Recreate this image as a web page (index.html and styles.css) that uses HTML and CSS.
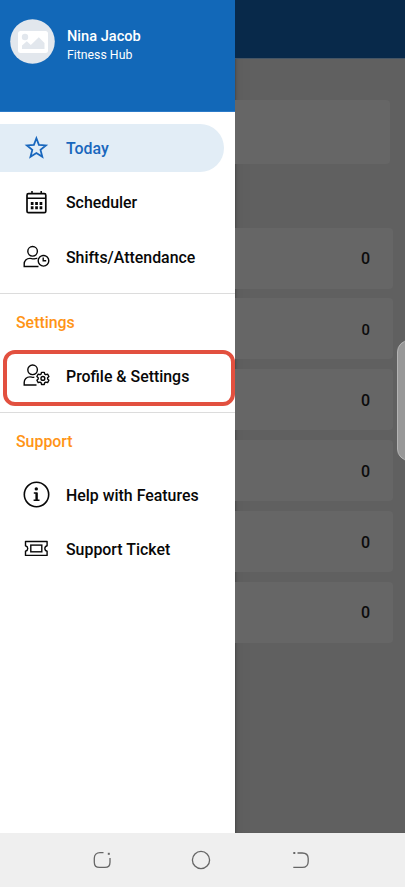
FILE: index.html
```
<!DOCTYPE html>
<html lang="en">
<head>
<meta charset="utf-8">
<title>Fitness Hub</title>
<link rel="stylesheet" href="styles.css">
</head>
<body>
<div class="phone">
  <div class="screen">
    <aside class="drawer">
      <header class="account">
        <svg class="avatar" viewBox="0 0 45 45"><circle cx="22.5" cy="22.5" r="22.3" fill="#e2e7ed"/><rect x="8" y="12" width="30" height="22" rx="2.5" fill="#fff"/><circle cx="15" cy="18" r="3.2" fill="#e2e7ed"/><path d="M12 30v-3.500l4.800-4.300 4 3.800 8-7.800 5.700 5.800v6z" fill="#e2e7ed"/></svg>
        <div class="who">
          <div class="name">Nina Jacob</div>
          <div class="club">Fitness Hub</div>
        </div>
      </header>
      <nav class="group">
        <a class="item active"><svg class="icon" viewBox="0 0 28 28"><path d="M14.400 4.300l2.500 6.600 7 .5-5.400 4.500 1.800 6.900-5.900-3.800-5.900 3.800 1.800-6.900-5.400-4.500 7-.5z" stroke-width="1.800"/></svg><span>Today</span></a>
        <a class="item"><svg class="icon" viewBox="0 0 28 28"><rect x="5" y="5.700" width="18.800" height="19" rx="1.500" stroke-width="1.700"/><path d="M5 10.300h18.800M10 3v3M19.200 3v3" stroke-width="1.500"/><path d="M8.800 15.500h2.700m1.700 0h2.700m1.700 0h2.700M8.800 19.700h2.700m1.700 0h2.700m1.700 0h2.700" stroke-width="2.900"/></svg><span>Scheduler</span></a>
        <a class="item"><svg class="icon" viewBox="0 0 28 28"><circle cx="10.600" cy="8.300" r="4.800"/><path d="M16.500 23.500H2.200v-2.400c0-3.600 2.300-5.700 5.800-5.700 1.700 0 2.300.8 4.300.4 1.300-.4 2.100-.5 3-.3"/><circle cx="21.500" cy="17.800" r="5.300"/><path d="M21.200 14.500v3.300h3"/></svg><span>Shifts/Attendance</span></a>
      </nav>
      <div class="group ruled">
        <h2>Settings</h2>
        <a class="item marked"><svg class="icon" viewBox="0 0 28 28"><circle cx="10.600" cy="7.800" r="4.800"/><path d="M14.500 23H2.200v-2.400c0-3.600 2.300-5.700 5.800-5.700 1.700 0 2.300.8 4.300.4"/><g transform="translate(20.900 16.400) scale(.87)" stroke-width="1.600"><path d="M-1.600-6.950h3.200l.5 2 1.300.7 2-.6 1.500 2.700-1.500 1.400v1.500l1.500 1.400-1.500 2.700-2-.6-1.300.7-.5 2h-3.200l-.5-2-1.300-.7-2 .6-1.500-2.700 1.500-1.400v-1.500l-1.500-1.400 1.500-2.700 2 .6 1.300-.7z" stroke-linejoin="round"/><circle r="2.200"/></g></svg><span>Profile &amp; Settings</span></a>
      </div>
      <div class="group ruled">
        <h2>Support</h2>
        <a class="item"><svg class="icon" viewBox="0 0 28 28"><circle cx="14.500" cy="13.500" r="12.200" stroke-width="1.600"/><circle cx="14.300" cy="7.900" r="1.700" fill="currentColor" stroke="none"/><path d="M11.800 12h3v7.300m-3.200 0h5.900" stroke-width="1.500"/><path d="M14.500 12v7.300" stroke-width="2.200"/></svg><span>Help with Features</span></a>
        <a class="item"><svg class="icon" viewBox="0 0 28 28"><path d="M3.500 6.500h21.600v4.200c-3 .8-3 4.700 0 5.500v4.200H3.500v-4.200c3-.8 3-4.700 0-5.500z" stroke-linejoin="round"/><rect x="8.800" y="10.100" width="11" height="6.700"/></svg><span>Support Ticket</span></a>
      </div>
    </aside>
    <main class="dimmed">
      <div class="appbar"></div>
      <div class="summary"></div>
      <div class="rows">
        <div class="row">0</div>
        <div class="row compact">0</div>
        <div class="row">0</div>
        <div class="row">0</div>
        <div class="row">0</div>
        <div class="row">0</div>
      </div>
      <div class="handle"></div>
    </main>
  </div>
  <footer class="sysnav">
    <svg viewBox="0 0 20 20"><path d="M11.500 2.600H8c-3.500 0-5.700 2.200-5.700 5.600v4c0 3.200 1.900 5.200 5.200 5.200H13c3.200 0 5-1.900 5-5.200V8"/><path d="M15.800 3.800h2" stroke-width="2"/></svg>
    <svg viewBox="0 0 20 20"><circle cx="10" cy="10" r="8.600"/></svg>
    <svg viewBox="0 0 20 20"><path d="M6.500 3h4.700c3.800 0 6 2.200 6 5.600v2.800c0 3.700-2.100 5.900-6 5.900H2.300"/><path d="M2.300 3h2" stroke-width="2"/></svg>
  </footer>
</div>
</body>
</html>
```
FILE: styles.css
```
*, *::after { box-sizing: border-box; }
body {
  margin: 0;
  background: #fff;
  font-family: Roboto, "Liberation Sans", sans-serif;
  overflow: hidden;
}
.phone { width: 405px; height: 890px; }
.screen { display: flex; height: 833px; }

.drawer {
  position: relative;
  z-index: 1;
  width: 235.400px;
  flex: none;
  background: #fff;
}
.account {
  display: flex;
  align-items: flex-start;
  height: 112px;
  padding: 19px 0 0 10px;
  gap: 12px;
  background: #1268b8;
  border-bottom: 1px solid #2c7bc9;
  color: #fff;
}
.avatar { width: 45px; height: 45px; }
.who { padding-top: 6.500px; }
.name { font-size: 14.600px; line-height: 20px; font-weight: 500; }
.club { font-size: 12.300px; line-height: 18px; }

.group { display: flex; flex-direction: column; gap: 7.200px; }
nav.group { padding: 12.400px 0 12.400px; }
.ruled { border-top: 1px solid #dcdcdc; }
.ruled h2 {
  margin: 18px 0 5.400px;
  padding-left: 16px;
  height: 21px;
  font-size: 15.900px;
  line-height: 21px;
  font-weight: 500;
  color: #ff9416;
}
.ruled h2 + .item { margin-top: 7px; }
.item {
  display: flex;
  align-items: center;
  height: 47.200px;
  padding-left: 22px;
  gap: 16px;
  color: #080808;
  font-size: 15.900px;
  font-weight: 500;
}
.item span { padding-top: 1.200px; }
.icon {
  width: 28px;
  height: 28px;
  fill: none;
  stroke: currentColor;
  stroke-width: 1.400;
}
.active {
  width: 224px;
  background: #e2edf6;
  color: #1967bd;
  border-radius: 0 24px 24px 0;
}
.marked { position: relative; margin-bottom: 12.400px; }
.marked::after {
  content: "";
  position: absolute;
  left: 3px;
  top: -2.300px;
  width: 232px;
  height: 56px;
  border: 4px solid #e2503f;
  border-radius: 12px;
}
.ruled .item:last-child span { padding-top: .4px; }
.ruled .marked:last-child span { padding-top: 1.200px; }

.dimmed {
  position: relative;
  flex: 1;
  background: #606060;
  box-shadow: inset 2px 0 2px -1px #484848, inset 12px 0 10px -8px #5a5a5a;
  overflow: hidden;
}
.appbar { height: 58.500px; background: #08294a; border-bottom: 1px solid #455565; }
.summary {
  height: 64px;
  margin: 41.500px 15px 0 0;
  background: #666;
  border-radius: 0 4px 4px 0;
}
.rows {
  display: flex;
  flex-direction: column;
  gap: 9.800px;
  margin: 63.700px 12.500px 0 0;
}
.row {
  display: flex;
  align-items: center;
  justify-content: flex-end;
  height: 61px;
  padding: 1.500px 22.500px 0 0;
  background: #666;
  border-radius: 0 4px 4px 0;
  color: #0c0c0c;
  font-size: 16px;
  font-weight: 500;
}
.compact { font-size: 14.800px; }
.handle {
  position: absolute;
  left: 162px;
  top: 340px;
  width: 24px;
  height: 121px;
  border: 1px solid #b4b4b4;
  border-radius: 13px;
  background: #989898;
}

.sysnav {
  display: flex;
  align-items: center;
  gap: 79.500px;
  height: 54px;
  padding-left: 91.700px;
  background: #efefef;
}
.sysnav svg {
  width: 20px;
  height: 20px;
  fill: none;
  stroke: #666;
  stroke-width: 1.300;
}
```
